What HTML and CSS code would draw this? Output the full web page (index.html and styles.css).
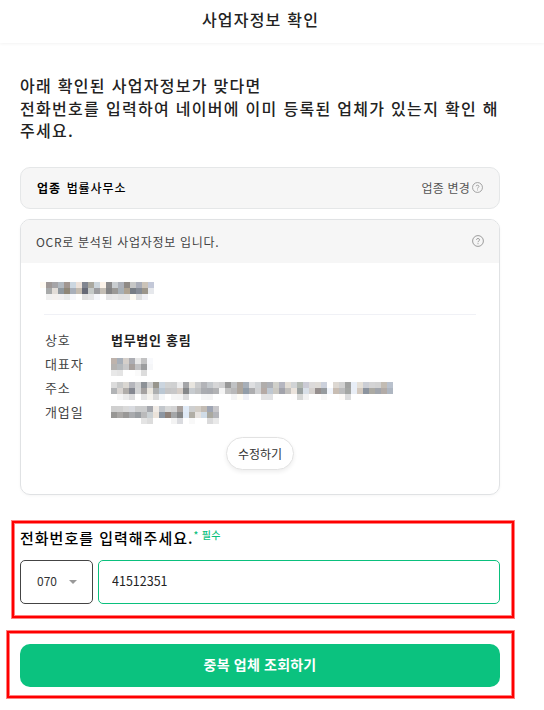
FILE: index.html
```html
<!DOCTYPE html>
<html lang="ko">
<head>
    <meta charset="UTF-8">
    <meta name="viewport" content="width=device-width, initial-scale=1.0">
    <title>사업자정보 확인</title>
    <link rel="stylesheet" href="styles.css">
</head>
<body>

    <header>
        <h1>사업자정보 확인</h1>
    </header>

    <main class="container">
        <h2>아래 확인된 사업자정보가 맞다면<br>전화번호를 입력하여 네이버에 이미 등록된 업체가 있는지 확인 해<br>주세요.</h2>

        <div class="category">
            <p><strong>업종</strong> <span>법률사무소</span></p>
            <a class="change">업종 변경
                <svg width="11" height="11" viewBox="0 0 12 12"><circle cx="6" cy="6" r="5.4"/><path d="M4.4 4.7C4.5 3.1 7.6 3.1 7.6 4.8C7.6 5.9 6 5.9 6 7.2M6 8.2V9.2"/></svg>
            </a>
        </div>

        <div class="card">
            <div class="card-header">
                <span>OCR로 분석된 사업자정보 입니다.</span>
                <svg width="12" height="12" viewBox="0 0 12 12"><circle cx="6" cy="6" r="5.4"/><path d="M4.4 4.7C4.5 3.1 7.6 3.1 7.6 4.8C7.6 5.9 6 5.9 6 7.2M6 8.2V9.2"/></svg>
            </div>
            <div class="card-body">
                <div class="number"><div class="mosaic" data-field="number"></div></div>
                <dl>
                    <dt>상호</dt><dd>법무법인 홍림</dd>
                    <dt>대표자</dt><dd><div class="mosaic" data-field="owner"></div></dd>
                    <dt>주소</dt><dd><div class="mosaic" data-field="address"></div></dd>
                    <dt>개업일</dt><dd><div class="mosaic" data-field="opened"></div></dd>
                </dl>
                <button type="button" class="edit-button">수정하기</button>
            </div>
        </div>

        <form>
            <div class="phone">
                <label for="phone">전화번호를 입력해주세요.<sup>* 필수</sup></label>
                <div class="phone-row">
                    <button type="button" class="prefix">070 <span class="arrow"></span></button>
                    <input type="text" id="phone" value="41512351">
                </div>
            </div>
            <div class="submit">
                <button type="submit" class="submit-button">중복 업체 조회하기</button>
            </div>
        </form>
    </main>

    <script src="script.js"></script>
</body>
</html>
```

FILE: styles.css
```css
* {
    box-sizing: border-box;
}

body {
    margin: 0;
    min-height: 710px;
    font-family: "Noto Sans CJK KR", sans-serif;
    background-color: #fff;
    color: #222;
}

h1, h2, p, dl, dd {
    margin: 0;
}

button, input {
    font-family: inherit;
    margin: 0;
}

header {
    height: 43px;
    padding-right: 24px;
    box-shadow: 0 1px 3px rgba(0, 0, 0, 0.05);
    text-align: center;
}

h1 {
    font-size: 16px;
    font-weight: 500;
    line-height: 39px;
    letter-spacing: 1.2px;
    padding-left: 1px;
}

.container {
    width: 480px;
    margin-left: 20px;
    padding-top: 31px;
}

h2 {
    height: 93px;
    font-size: 16px;
    font-weight: 500;
    line-height: 22.5px;
    letter-spacing: 1.3px;
    white-space: nowrap;
}

.category {
    display: flex;
    justify-content: space-between;
    align-items: center;
    height: 42px;
    padding: 0 16px 1px;
    border: 1px solid #e5e7e8;
    border-radius: 10px;
    background-color: #f6f6f6;
    font-size: 12px;
    color: #000;
}

.category p {
    font-weight: 500;
    letter-spacing: 0.9px;
    word-spacing: 1.5px;
}

.category strong {
    font-weight: 700;
}

.change {
    display: flex;
    align-items: center;
    gap: 2px;
    color: #555;
    letter-spacing: 0.2px;
}

svg {
    flex: none;
    fill: none;
    stroke: #929292;
    stroke-width: 0.9;
}

.card {
    height: 276px;
    margin-top: 10px;
    border: 1px solid #e0e2e4;
    border-radius: 10px;
    box-shadow: 0 1px 3px rgba(0, 0, 0, 0.04);
    overflow: hidden;
}

.card-header {
    display: flex;
    justify-content: space-between;
    align-items: center;
    height: 43px;
    padding: 0 15px 1px;
    background-color: #f6f6f6;
    color: #444;
    font-size: 12px;
    letter-spacing: 0.7px;
}

.card-body {
    padding: 0 23px 0 24px;
}

.number {
    height: 52px;
    padding: 19px 0 0 1px;
    margin-left: -1px;
    border-bottom: 1px solid #f0f1f6;
}

.number .mosaic {
    margin-left: -5px;
}

dl {
    display: grid;
    grid-template-columns: 66px 1fr;
    grid-auto-rows: 24px;
    margin-top: 13px;
    font-size: 13px;
    line-height: 24px;
}

dt {
    color: #444;
    letter-spacing: 0.9px;
}

dd {
    font-weight: 700;
    letter-spacing: 0.7px;
}

dd .mosaic {
    margin-top: 6px;
}

/* hidden business details, 6px blocks */
.mosaic {
    display: grid;
    grid-template-columns: repeat(47, 6px);
    grid-auto-rows: 6px;
}

.edit-button {
    display: block;
    width: 68px;
    height: 33px;
    margin: 13px auto 0 181px;
    padding: 0 0 1px;
    border: 1px solid #e2e2e2;
    border-radius: 17px;
    background-color: #fff;
    box-shadow: 0 2px 4px rgba(0, 0, 0, 0.07);
    color: #333;
    font-size: 12px;
}

.phone, .submit {
    position: relative;
}

.phone {
    margin-top: 32px;
}

/* red highlight boxes */
.phone::after, .submit::after {
    content: "";
    position: absolute;
    border: 2px solid #ff0000;
    box-shadow: 0 0 0 1px #ff8080, inset 0 0 0 1px #ff8080;
    pointer-events: none;
}

.phone::after {
    inset: -6px -14px -14px -8px;
}

.submit::after {
    inset: -13px -14px -11px -13px;
}

label {
    display: block;
    height: 33px;
    font-size: 15px;
    font-weight: 500;
    line-height: 21px;
    color: #000;
    letter-spacing: 1px;
}

sup {
    position: relative;
    top: -5px;
    vertical-align: baseline;
    font-size: 10px;
    line-height: 0;
    color: #0ac07d;
    letter-spacing: 0.3px;
}

.phone-row {
    display: flex;
    gap: 5px;
    height: 44px;
}

.prefix {
    display: flex;
    align-items: center;
    gap: 12px;
    width: 73px;
    padding: 0 0 3px 16px;
    border: 1px solid #444;
    border-radius: 5px;
    background-color: #fff;
    font-size: 12px;
    color: #333;
}

.arrow {
    border: 4px solid transparent;
    border-top-color: #999;
    border-bottom: 0;
    margin-top: 3px;
}

input {
    flex: 1;
    min-width: 0;
    padding: 0 13px 3px;
    border: 1px solid #0ac07d;
    border-radius: 5px;
    outline: none;
    font-size: 12.5px;
    color: #222;
}

.submit {
    margin-top: 40px;
}

.submit-button {
    display: block;
    width: 100%;
    height: 43px;
    padding: 0 0 3px;
    border: none;
    border-radius: 10px;
    background-color: #0bc27f;
    color: #fff;
    font-size: 14px;
    font-weight: 700;
    letter-spacing: 0.2px;
}
```

FILE: script.js
```js
// one string per row of blocks, "-" is an empty block
const mosaics = {
    number: [
        "fffaf2 9f9896 a6a5a8 b1b8bf a19690 ccd7e1 ece1d9 808590 aaa89f ccd5dc fbf2e8 8c8b8c c9cdd0 acb0b8 8f8a85 c6c7c6 a9adb8 cbc3b8 c3c8d8",
        "- a8aaaa e2ddd8 8f989f 8f8778 a8afba c3bbb0 666a77 c5c9c8 9c9ca0 c4beb5 848485 9b9996 a7b0b7 aea392 787e85 868c95 9c968c e6e8ec",
        "- f0f0f0 f3f0ee f1f0f0 e9ebeb f7f8fb - e0e0e1 e6e6e8 f5f6fb - e5e5e6 e8e8e8 e2e2e2 e3e3e3 fefbf2 dedfe0 f0f0f5 -"
    ],
    owner: [
        "beb3ac a7afb9 d5cfca acadb3 e8e8e8 c2c2c3 f8f9fc",
        "b5b3b1 b5b9bc c8c8c9 a7a09d c2c2c4 9c9d9f f5f6f8",
        "e8e8e8 e4e4e4 - - fafafa dcdcdc -"
    ],
    address: [
        "dcdcdc c9caca dad7d2 b5b6bc d1d2d3 8d9297 cccdce 97958c cbd5df d1d2d2 cfd0d1 ececed a4a5a8 e8e5df cbcccd b3b4b8 c4c8cc d6d6d7 d0d0d1 999999 c0c2c4 ada69f a7afb9 dedfe1 d0d3d6 b0adab adb0b6 d0d0ca b5b6c0 e2ddd5 d1d4d6 b4bab3 cbcbd5 dcdada dedbd7 ccd1dc - ddd8d2 d1d1d1 a1a2a1 e8eef7 e5e0d8 cbced5 d4d4d5 d2d2d2 c3bcb3 b9c1cd",
        "b2b4b6 d8d4d1 b0adaa 858891 d3d4d5 a4a1a0 ebe7df adafb0 bac7d3 c5c5c6 c7c7c8 d5cdc7 858789 c7cbcf c1c2c3 aaacb0 a8aaaf b2b3b5 f4f4f4 c2c2c2 b8b8b9 aea69d 929da9 adadaf d0d1d3 b5aaa5 bfc8d2 cbc9c3 a2a3ab c2c0bd eae3dc 9ba2a2 d9e0e8 d5d1ce 968f8e 969b9f f0f4fb c8bdb3 bcbcbd a4a6a4 e9eef6 d3c9bf 8c949f acaaa3 a1a5ac b2aba7 aeb6c1",
        "- f5f5f5 ebebeb dcdcdd - e4e4e4 f5f3ef dadada f4f6f8 - f5f5f5 f4f4f4 dcdcdd - - f5f5f5 f4f4f4 - - - f4f4f4 fefcf6 f0f1f7 - - e3e3e4 e2e3e5 - - - fdfdfd d7d8d7 f2f2f2 - - f7f7f7 - - fdfaf7 dcdcdd - - - - - - -"
    ],
    opened: [
        "d0d0d0 d1d1d1 dadada d9dbe0 cccdce cbcccd a5a7ad f0ebe6 c3c7cc d8d9d9 d3d3d4 a9a29f e1ebf7 cecfd0 d3cec7 c3bcb4 9fa5b3 c8c7ca",
        "989795 a9a7a5 999897 a8aaad 999da1 bababb cbd1d4 ebe3da 8c96a2 8e8179 a4a6a8 858687 dfe9f5 b1aea6 e7e3e0 d0dce7 aaa9a0 b4b5ba",
        "- - - - - e4e4e4 dcdcdc - - - f3f3f3 dadbdf - f8f8f8 - - dadadb e9e9e9"
    ]
};

document.querySelectorAll('.mosaic').forEach(box => {
    mosaics[box.dataset.field].forEach((row, y) => {
        row.split(' ').forEach((color, x) => {
            if (color === '-') return;
            const block = document.createElement('i');
            block.style.gridArea = `${y + 1} / ${x + 1}`;
            block.style.backgroundColor = '#' + color;
            box.appendChild(block);
        });
    });
});
```
